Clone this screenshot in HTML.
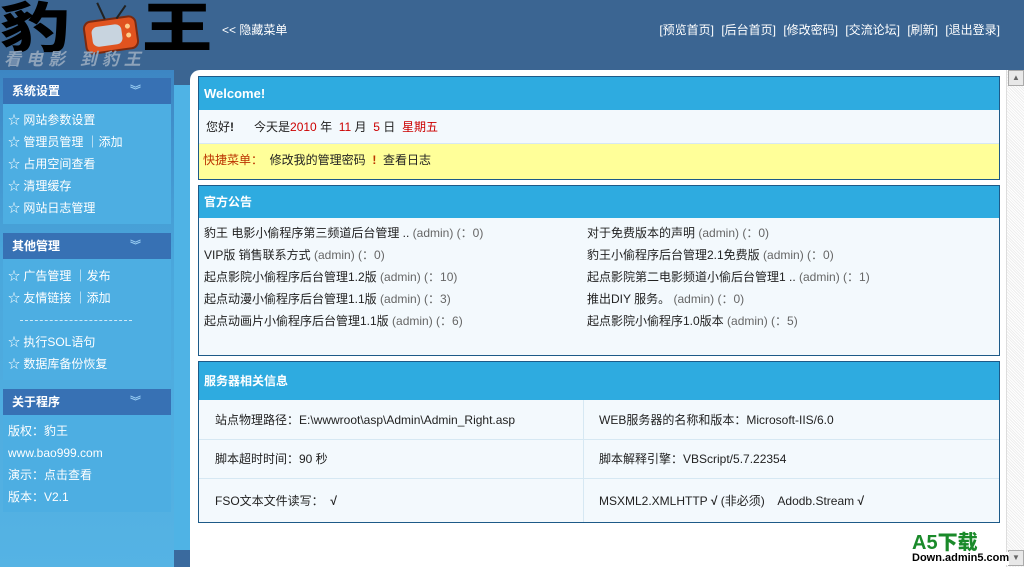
<!DOCTYPE html>
<html><head><meta charset="utf-8"><style>
*{margin:0;padding:0;box-sizing:border-box}
body{width:1024px;height:567px;overflow:hidden;background:#3b6592;font-family:"Liberation Sans","Noto Sans CJK SC",sans-serif;font-size:12px;color:#222;position:relative}
.abs{position:absolute}
.lg{position:absolute;top:-4px;font-size:54px;font-weight:900;color:#000;font-family:"Noto Sans CJK SC",sans-serif;line-height:56px;transform:scaleX(1.3);transform-origin:left top}
.sub{left:4px;top:51px;font-size:17px;color:#8ea3ba;font-weight:bold;letter-spacing:5px;line-height:18px;font-style:italic;white-space:nowrap}
.toplinks{right:24px;top:21px;color:#fff;font-size:12px;word-spacing:4px}
.hide{left:222px;top:21px;color:#fff}
.side{left:0;top:70px;width:174px;height:497px;background:linear-gradient(#3d86c3,#4aa7dc 40%,#55b3e4)}
.ph{position:absolute;left:3px;width:168px;height:26px;background:#3771b4;color:#fff;font-weight:bold;font-size:12px;line-height:26px;padding-left:9px}
.ph i{position:absolute;right:30px;top:0;font-style:normal;color:#9cd0f5;font-size:11px}
.pb{position:absolute;left:3px;width:168px;background:#4daee2;color:#fff;padding-left:5px;line-height:22px}
.strip{left:174px;top:85px;width:16px;height:465px;background:#4fb3e5}
.stripb{left:174px;top:550px;width:16px;height:17px;background:#3a6a9e}
.main{left:190px;top:70px;width:816px;height:497px;background:#fff;border-top-left-radius:10px}
.scroll{left:1006px;top:70px;width:18px;height:497px;background:repeating-linear-gradient(45deg,#eee 0 1px,#fff 1px 2px);border-left:1px solid #ddd}
.sb{position:absolute;left:1px;width:16px;height:16px;background:#e8e8e8;border:1px solid #aaa;font-size:8px;color:#666;text-align:center;line-height:14px}
.box{position:absolute;left:198px;width:802px;border:1px solid #1d5a88;background:#f3f9fd}
.bh{background:#2eabe0;color:#fff;font-weight:bold;padding-left:5px}
.red{color:#c00}
.gray{color:#666}
.row{position:absolute;line-height:22px}
</style></head><body>
<div class="lg" style="left:0">豹</div>
<div class="lg" style="left:142px">王</div>
<div class="abs" style="left:84px;top:18px;width:54px;height:34px;background:#e0531f;border-radius:8px;border:2px solid #7a2a10;transform:rotate(-8deg)"><div style="position:absolute;left:6px;top:5px;width:30px;height:20px;background:#c8d4df;border-radius:6px"></div><div style="position:absolute;right:5px;top:6px;width:5px;height:5px;background:#fc8;border-radius:50%"></div><div style="position:absolute;right:5px;top:15px;width:5px;height:5px;background:#fc8;border-radius:50%"></div></div>
<div class="abs" style="left:100px;top:2px;width:2px;height:18px;background:#222;transform:rotate(-25deg)"></div>
<div class="abs" style="left:120px;top:4px;width:2px;height:16px;background:#222;transform:rotate(35deg)"></div>
<div class="abs sub">看电影 到豹王</div>
<div class="abs hide">&lt;&lt; 隐藏菜单</div>
<div class="abs toplinks">[预览首页] [后台首页] [修改密码] [交流论坛] [刷新] [退出登录]</div>
<div class="abs side"></div>
<div class="ph" style="top:78px">系统设置<i>︾</i></div>
<div class="pb" style="top:104px;height:120px;padding-top:5px">☆ 网站参数设置<br>☆ 管理员管理 ｜添加<br>☆ 占用空间查看<br>☆ 清理缓存<br>☆ 网站日志管理</div>
<div class="ph" style="top:233px">其他管理<i>︾</i></div>
<div class="pb" style="top:259px;height:121px;padding-top:6px">☆ 广告管理 ｜发布<br>☆ 友情链接 ｜添加<div style="height:22px;position:relative"><div style="position:absolute;left:12px;top:11px;width:112px;border-top:1px dashed #cfe9f7"></div></div>☆ 执行SOL语句<br>☆ 数据库备份恢复</div>
<div class="ph" style="top:389px">关于程序<i>︾</i></div>
<div class="pb" style="top:415px;height:97px;padding-top:5px">版权：豹王<br>www.bao999.com<br>演示：点击查看<br>版本：V2.1</div>
<div class="abs strip"></div><div class="abs stripb"></div>
<div class="abs main"></div>
<div class="abs scroll"><div class="sb" style="top:0">▲</div><div class="sb" style="top:480px">▼</div></div>

<div class="box" style="top:76px;height:104px">
<div class="bh" style="height:33px;line-height:34px;font-size:13px">Welcome!</div>
<div style="height:34px;line-height:34px;padding-left:7px;border-bottom:1px solid #d6e8f3">您好<b>!</b>&nbsp;&nbsp;&nbsp;&nbsp;&nbsp; 今天是<span class="red">2010</span> 年 &nbsp;<span class="red">11</span> 月 &nbsp;<span class="red">5</span> 日 &nbsp;<span class="red">星期五</span></div>
<div style="height:35px;line-height:33px;background:#ffff99;padding-left:4px"><span style="color:#b30">快捷菜单：</span>&nbsp; 修改我的管理密码 &nbsp;<b style="color:#b30">!</b>&nbsp; 查看日志</div>
</div>

<div class="box" style="top:185px;height:171px">
<div class="bh" style="height:32px;line-height:32px">官方公告</div>
<div class="row" style="left:5px;top:36px">豹王 电影小偷程序第三频道后台管理 .. <span class="gray">(admin) (：0)</span><br>VIP版 销售联系方式 <span class="gray">(admin) (：0)</span><br>起点影院小偷程序后台管理1.2版 <span class="gray">(admin) (：10)</span><br>起点动漫小偷程序后台管理1.1版 <span class="gray">(admin) (：3)</span><br>起点动画片小偷程序后台管理1.1版 <span class="gray">(admin) (：6)</span></div>
<div class="row" style="left:388px;top:36px">对于免费版本的声明 <span class="gray">(admin) (：0)</span><br>豹王小偷程序后台管理2.1免费版 <span class="gray">(admin) (：0)</span><br>起点影院第二电影频道小偷后台管理1 .. <span class="gray">(admin) (：1)</span><br>推出DIY 服务。 <span class="gray">(admin) (：0)</span><br>起点影院小偷程序1.0版本 <span class="gray">(admin) (：5)</span></div>
</div>

<div class="box" style="top:361px;height:162px">
<div class="bh" style="height:38px;line-height:38px">服务器相关信息</div>
<div style="position:absolute;left:384px;top:38px;width:1px;height:122px;background:#d6e8f3"></div>
<div style="position:absolute;left:0;top:77px;width:100%;height:1px;background:#d6e8f3"></div>
<div style="position:absolute;left:0;top:116px;width:100%;height:1px;background:#d6e8f3"></div>
<div class="row" style="left:16px;top:47px">站点物理路径：E:\wwwroot\asp\Admin\Admin_Right.asp</div>
<div class="row" style="left:400px;top:47px">WEB服务器的名称和版本：Microsoft-IIS/6.0</div>
<div class="row" style="left:16px;top:86px">脚本超时时间：90 秒</div>
<div class="row" style="left:400px;top:86px">脚本解释引擎：VBScript/5.7.22354</div>
<div class="row" style="left:16px;top:128px">FSO文本文件读写： &nbsp;<b>√</b></div>
<div class="row" style="left:400px;top:128px">MSXML2.XMLHTTP <b>√</b> (非必须) &nbsp;&nbsp; Adodb.Stream <b>√</b></div>
</div>

<div class="abs" style="left:912px;top:532px;color:#1a8a2a;font-weight:900;font-size:20px;line-height:22px">A5下载</div>
<div class="abs" style="left:912px;top:552px;color:#000;font-weight:bold;font-size:11px;line-height:13px;background:#fff">Down.admin5.com</div>
</body></html>
